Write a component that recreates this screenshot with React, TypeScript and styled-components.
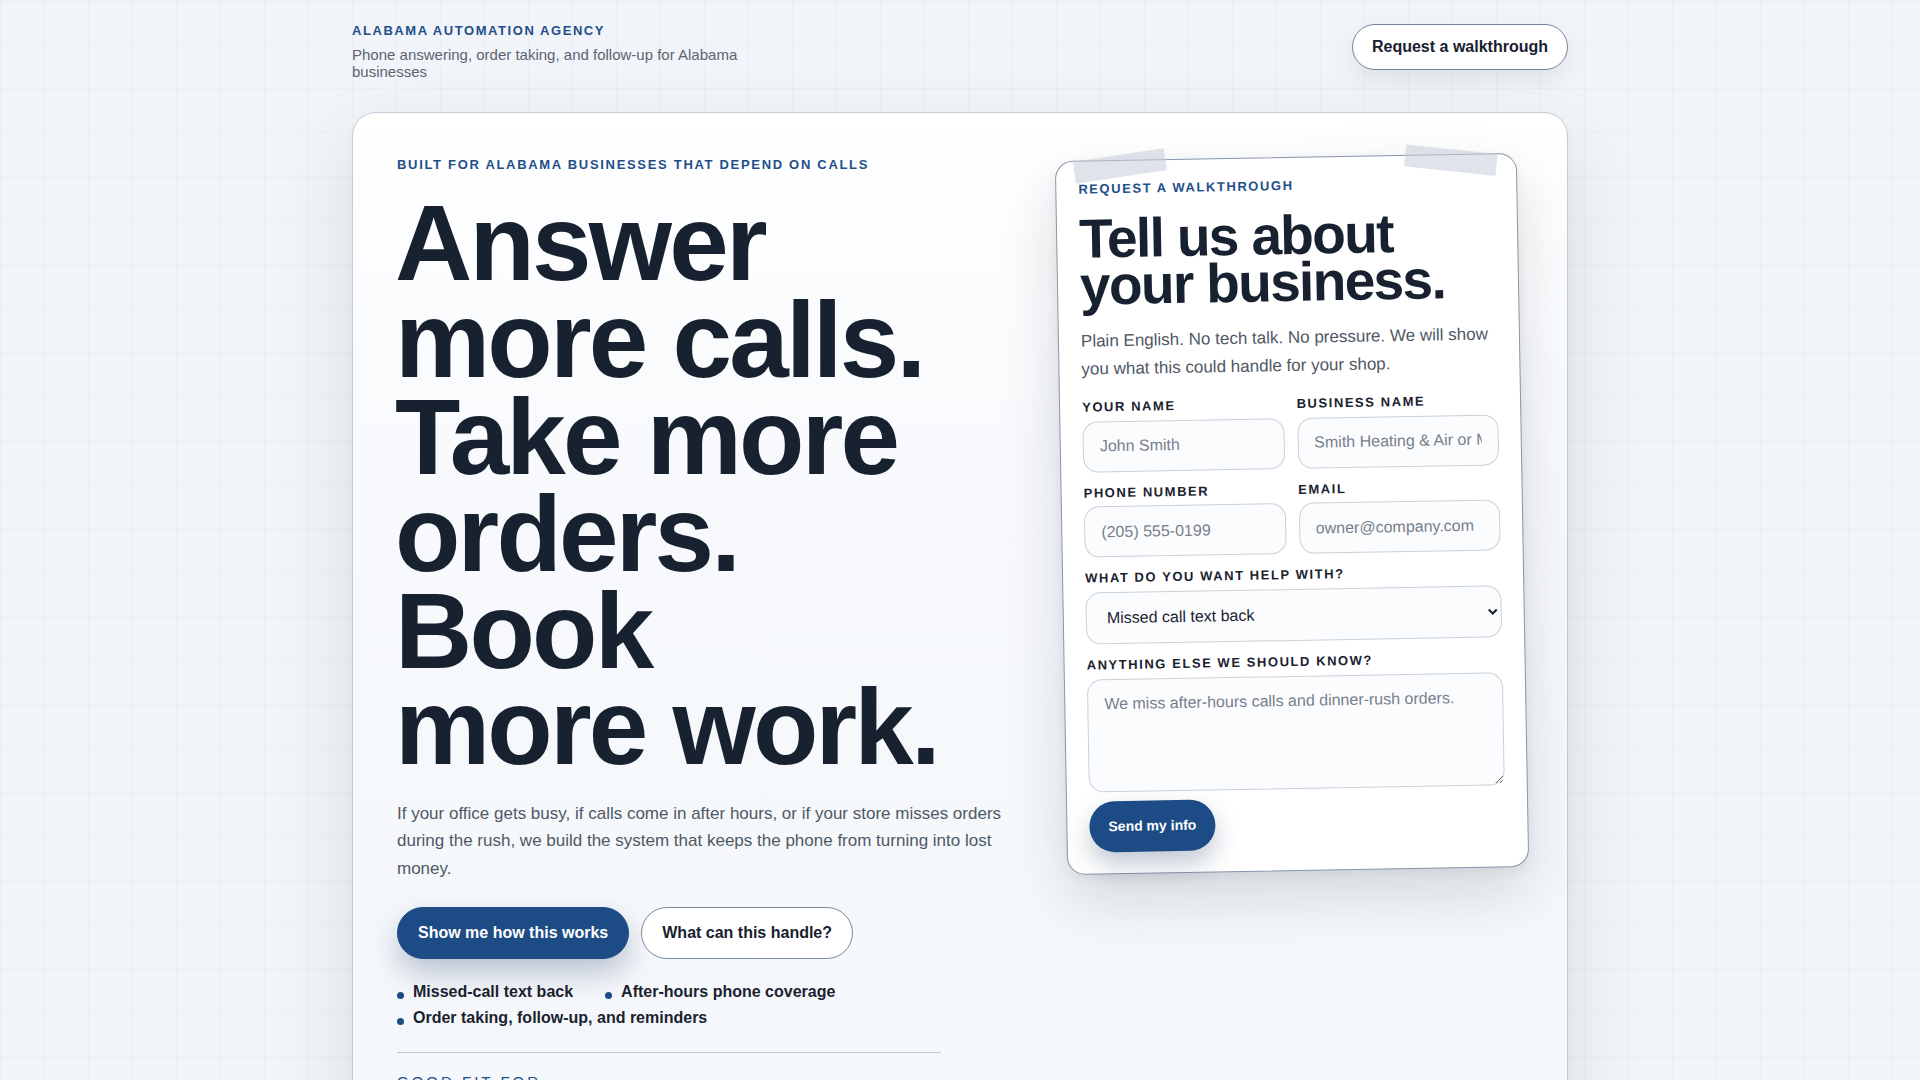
import styled, { createGlobalStyle } from "styled-components";

const GlobalStyle = createGlobalStyle`
  *, *::before, *::after { box-sizing: border-box; }
  html, body { margin: 0; padding: 0; }
  body {
    font-family: "Liberation Sans", Arial, sans-serif;
    color: #172130;
    background-color: #f1f4f8;
    background-image:
      linear-gradient(rgba(148, 163, 184, 0.065) 1px, transparent 1px),
      linear-gradient(90deg, rgba(148, 163, 184, 0.065) 1px, transparent 1px);
    background-size: 44px 44px;
  }
`;

const Page = styled.div`
  width: 100%;
  max-width: 1216px;
  margin: 0 auto;
`;

const Header = styled.header`
  display: flex;
  justify-content: space-between;
  align-items: flex-start;
  padding-top: 23px;
  margin-bottom: 32px;
`;

const Brand = styled.div`
  display: flex;
  flex-direction: column;
  gap: 7px;
`;

const Kicker = styled.div<{ $spacing?: string }>`
  font-size: 13px;
  line-height: 1.2;
  font-weight: 700;
  letter-spacing: ${(p) => p.$spacing || "0.12em"};
  text-transform: uppercase;
  color: #1f4f8a;
`;

const BrandSub = styled.p`
  margin: 0;
  max-width: 420px;
  font-size: 15px;
  line-height: 17px;
  color: #5b6472;
`;

const HeaderButton = styled.button`
  height: 46px;
  margin-top: 1px;
  padding: 0 19px;
  border-radius: 999px;
  border: 1px solid #778498;
  background: #ffffff;
  font-family: inherit;
  font-size: 16px;
  font-weight: 700;
  color: #172130;
  box-shadow: 0 10px 24px rgba(15, 23, 42, 0.08);
  cursor: pointer;
`;

const HeroCard = styled.section`
  border: 1px solid #c3ccd7;
  border-radius: 24px;
  padding: 44px 44px 60px;
  background: linear-gradient(180deg, #ffffff 0%, #f7f9fc 35%, #f4f7fb 100%);
  box-shadow: 0 30px 80px rgba(15, 23, 42, 0.1), 0 2px 6px rgba(15, 23, 42, 0.03);
  display: grid;
  grid-template-columns: 1fr 462px;
  gap: 48px;
  align-items: start;
`;

const Left = styled.div`
  min-width: 0;
`;

const Headline = styled.h1`
  margin: 23px 0 24px -2px;
  font-size: 107px;
  line-height: 0.905;
  font-weight: 700;
  letter-spacing: -0.026em;
  color: #172130;
`;

const Lede = styled.p`
  margin: 0;
  max-width: 620px;
  font-size: 17px;
  line-height: 1.6;
  color: #4f5865;
`;

const Actions = styled.div`
  display: flex;
  gap: 12px;
  margin-top: 25px;
`;

const PillButton = styled.button<{ $variant?: "primary" | "ghost" }>`
  height: 52px;
  padding: 0 20px;
  border-radius: 999px;
  font-family: inherit;
  font-size: 16px;
  font-weight: 700;
  cursor: pointer;
  ${(p) =>
    p.$variant === "ghost"
      ? `
    background: #ffffff;
    color: #172130;
    border: 1px solid #7d8a9b;
  `
      : `
    background: #1d4b85;
    color: #ffffff;
    border: 1px solid #1d4b85;
    box-shadow: 0 14px 30px rgba(29, 55, 95, 0.28);
  `}
`;

const Points = styled.ul`
  list-style: none;
  margin: 24px 0 0;
  padding: 0;
  display: flex;
  flex-wrap: wrap;
  gap: 8px 32px;
  max-width: 600px;
`;

const Point = styled.li`
  display: flex;
  align-items: center;
  gap: 9px;
  font-size: 16px;
  line-height: 1.15;
  font-weight: 700;
  color: #1a2230;

  &::before {
    content: "";
    width: 7px;
    height: 7px;
    margin-top: 7px;
    border-radius: 999px;
    background: #1d4b85;
    flex-shrink: 0;
  }
`;

const GoodFit = styled.div`
  max-width: 544px;
  margin-top: 24px;
  padding-top: 20px;
  border-top: 1px solid #c2c9d3;
`;

const GoodFitLabel = styled.div`
  font-size: 15px;
  line-height: 1.2;
  font-weight: 500;
  letter-spacing: 0.2em;
  text-transform: uppercase;
  color: #1f4f8a;
`;

const FitList = styled.div`
  display: flex;
  flex-wrap: wrap;
  gap: 8px;
  margin-top: 14px;
`;

const FitChip = styled.span`
  padding: 8px 14px;
  border-radius: 999px;
  border: 1px solid #c9d1db;
  background: #ffffff;
  font-size: 14px;
  color: #4f5865;
`;

const FormCard = styled.form`
  position: relative;
  transform: rotate(-1deg);
  background: #ffffff;
  border: 1px solid #8796aa;
  border-radius: 18px;
  padding: 20px 22px 21px;
  box-shadow: 0 26px 60px rgba(15, 23, 42, 0.14), 0 4px 12px rgba(15, 23, 42, 0.05);
`;

const Tape = styled.span<{ $side: "left" | "right" }>`
  position: absolute;
  top: -6px;
  width: 92px;
  height: 22px;
  background: rgba(196, 206, 219, 0.55);
  ${(p) =>
    p.$side === "left"
      ? "left: 18px; transform: rotate(-7.5deg);"
      : "right: 19px; transform: rotate(7deg);"}
`;

const FormTitle = styled.h2`
  margin: 18px 0 0;
  font-size: 55px;
  line-height: 0.86;
  font-weight: 700;
  letter-spacing: -0.03em;
  color: #172130;
`;

const FormLede = styled.p`
  margin: 18px 0 0;
  font-size: 17px;
  line-height: 28px;
  color: #4f5865;
`;

const FieldGrid = styled.div`
  display: grid;
  grid-template-columns: 1fr 1fr;
  gap: 13px;
  margin-top: 16px;
`;

const Field = styled.label<{ $wide?: boolean }>`
  display: flex;
  flex-direction: column;
  gap: 6px;
  min-width: 0;
  ${(p) => (p.$wide ? "grid-column: 1 / -1;" : "")}
`;

const FieldLabel = styled.span`
  font-size: 13px;
  line-height: 1.2;
  font-weight: 700;
  letter-spacing: 0.12em;
  text-transform: uppercase;
  color: #1a2230;
`;

const controlBase = `
  display: block;
  width: 100%;
  border: 1px solid #c9d1db;
  border-radius: 15px;
  background: #fbfcfe;
  font-family: "Liberation Sans", Arial, sans-serif;
  font-size: 16px;
  color: #1a2230;
  outline: none;
`;

const Input = styled.input`
  ${controlBase}
  height: 51px;
  padding: 0 16px;

  &::placeholder {
    color: #777f8b;
  }
`;

const Select = styled.select`
  ${controlBase}
  height: 52px;
  padding: 0 8px 0 16px;
`;

const TextArea = styled.textarea`
  ${controlBase}
  height: 113px;
  padding: 14px 16px;
  resize: vertical;
  line-height: 1.3;

  &::placeholder {
    color: #777f8b;
  }
`;

const SendButton = styled.button`
  display: block;
  margin-top: 9px;
  height: 51px;
  padding: 0 19px;
  border: none;
  border-radius: 999px;
  background: #1d4b85;
  color: #ffffff;
  font-family: inherit;
  font-size: 14px;
  font-weight: 700;
  box-shadow: 0 12px 26px rgba(29, 55, 95, 0.28);
  cursor: pointer;
`;

export default function App() {
  return (
    <>
      <GlobalStyle />
      <Page>
        <Header>
          <Brand>
            <Kicker>Alabama Automation Agency</Kicker>
            <BrandSub>
              Phone answering, order taking, and follow-up for Alabama businesses
            </BrandSub>
          </Brand>
          <HeaderButton>Request a walkthrough</HeaderButton>
        </Header>

        <HeroCard>
          <Left>
            <Kicker $spacing="0.13em">Built for Alabama businesses that depend on calls</Kicker>
            <Headline>
              Answer
              <br />
              more calls.
              <br />
              Take more
              <br />
              orders.
              <br />
              Book
              <br />
              more work.
            </Headline>
            <Lede>
              If your office gets busy, if calls come in after hours, or if your store misses
              orders during the rush, we build the system that keeps the phone from turning into
              lost money.
            </Lede>
            <Actions>
              <PillButton>Show me how this works</PillButton>
              <PillButton $variant="ghost">What can this handle?</PillButton>
            </Actions>
            <Points>
              <Point>Missed-call text back</Point>
              <Point>After-hours phone coverage</Point>
              <Point>Order taking, follow-up, and reminders</Point>
            </Points>
            <GoodFit>
              <GoodFitLabel>Good fit for</GoodFitLabel>
              <FitList>
                <FitChip>Home services</FitChip>
                <FitChip>Restaurants</FitChip>
                <FitChip>Retail shops</FitChip>
              </FitList>
            </GoodFit>
          </Left>

          <FormCard onSubmit={(e) => e.preventDefault()}>
            <Tape $side="left" />
            <Tape $side="right" />
            <Kicker $spacing="0.12em">Request a walkthrough</Kicker>
            <FormTitle>Tell us about your business.</FormTitle>
            <FormLede>
              Plain English. No tech talk. No pressure. We will show you what this could handle
              for your shop.
            </FormLede>
            <FieldGrid>
              <Field>
                <FieldLabel>Your name</FieldLabel>
                <Input placeholder="John Smith" />
              </Field>
              <Field>
                <FieldLabel>Business name</FieldLabel>
                <Input placeholder="Smith Heating & Air or Main Street Cafe" />
              </Field>
              <Field>
                <FieldLabel>Phone number</FieldLabel>
                <Input placeholder="(205) 555-0199" />
              </Field>
              <Field>
                <FieldLabel>Email</FieldLabel>
                <Input placeholder="owner@company.com" />
              </Field>
              <Field $wide>
                <FieldLabel>What do you want help with?</FieldLabel>
                <Select defaultValue="missed">
                  <option value="missed">Missed call text back</option>
                  <option value="after">After-hours phone coverage</option>
                  <option value="orders">Order taking</option>
                  <option value="follow">Follow-up and reminders</option>
                </Select>
              </Field>
              <Field $wide>
                <FieldLabel>Anything else we should know?</FieldLabel>
                <TextArea placeholder="We miss after-hours calls and dinner-rush orders." />
              </Field>
            </FieldGrid>
            <SendButton type="submit">Send my info</SendButton>
          </FormCard>
        </HeroCard>
      </Page>
    </>
  );
}
